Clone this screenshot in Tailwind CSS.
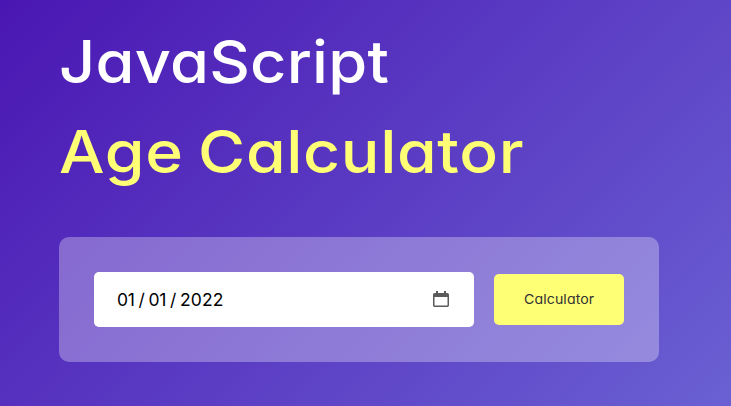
<!DOCTYPE html>
<html lang="en">
<head>
<meta charset="utf-8">
<title>Age Calculator</title>
<script src="https://cdn.jsdelivr.net/npm/@tailwindcss/browser@4"></script>
</head>
<body class="h-screen overflow-hidden bg-[linear-gradient(135deg,#4a16b3,#6a60d3)] pl-[59px] pt-[16px] font-['Inter','Open_Sans',sans-serif] [font-feature-settings:'cv11']">
  <h1 class="text-[59.5px] leading-[90px] font-medium text-white whitespace-nowrap">
    <span class="block w-fit origin-left scale-x-[1.06] tracking-[0.2px]">JavaScript</span>
    <span class="block w-fit origin-left scale-x-[1.08] tracking-[0.6px] [word-spacing:-3px] text-[#ffff76]">Age Calculator</span>
  </h1>
  <main class="mt-[41px] flex h-[125px] w-[600px] items-center justify-between rounded-[10px] bg-white/30 px-[35px]">
    <div class="flex h-[55px] w-[380px] items-center justify-between rounded-[5px] bg-white pl-[23px] pr-[24px]">
      <span class="pt-px text-[17.5px] tracking-[-0.4px] whitespace-pre text-black"><span>01</span><span class="mx-[-0.4px]"> / </span><span>01</span><span class="mx-[-0.4px]"> / </span><span class="tracking-[0.1px]">2022</span></span>
      <svg class="h-[18px] w-[18px]" viewBox="0 0 18 18" fill="none">
        <path d="M4 0h2v2h6V0h2v2h1.200c1 0 1.800.8 1.800 1.800v10.400c0 1-.8 1.800-1.800 1.800H2.800c-1 0-1.800-.8-1.800-1.800V3.800C1 2.800 1.800 2 2.800 2H4zM2.500 6v8.500h13V6z" fill="#5b5b5b" fill-rule="evenodd"/>
      </svg>
    </div>
    <button class="h-[51px] w-[130px] rounded-[5px] bg-[#ffff76] text-[13.333px] text-[#333]"><span class="inline-block scale-x-[1.06] tracking-[0.1px]">Calculator</span></button>
  </main>
</body>
</html>
